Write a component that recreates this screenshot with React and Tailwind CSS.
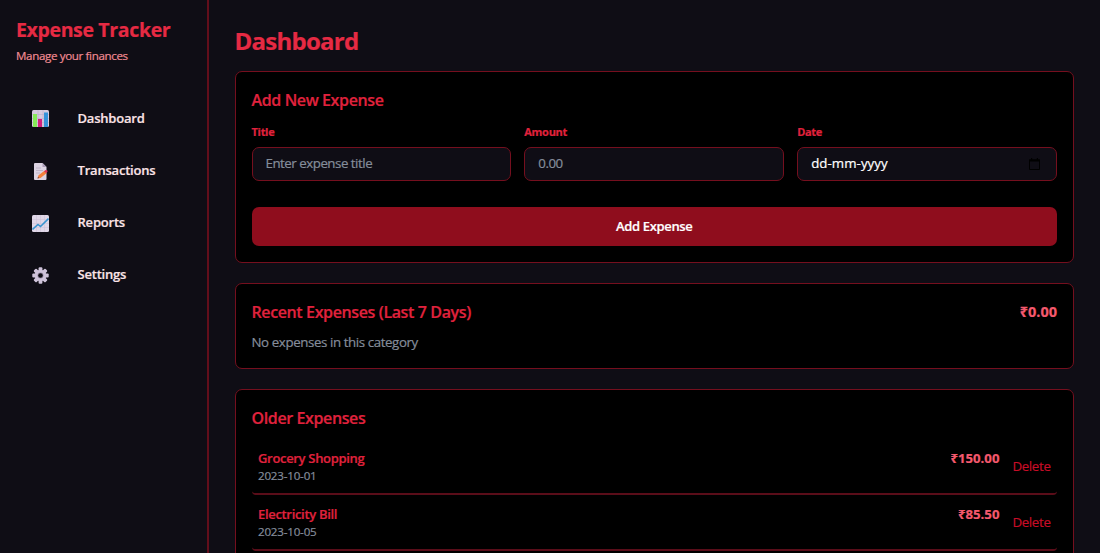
import React, { useState } from 'react';

const ChartIcon = () => (
  <svg viewBox="0 0 17 17" className="w-[17px] h-[17px] -mt-px">
    <rect width="17" height="17" rx="1.5" fill="#d6cbdf" />
    <path d="M0 4.5h17M0 8.5h17M0 12.5h17M6 0v17M11 0v17" stroke="#bcaec9" strokeWidth=".6" />
    <rect x="1" y="4" width="4" height="13" fill="#86ea58" />
    <rect x="6" y="9" width="4" height="8" fill="#d2207c" />
    <rect x="12" y="2.5" width="4" height="14.5" fill="#3593da" />
  </svg>
);

const MemoIcon = () => (
  <svg viewBox="0 0 17 17" className="w-[17px] h-[17px]">
    <path d="M3 0h7.5l4 4v12q0 1-1 1H3q-1 0-1-1V1q0-1 1-1z" fill="#dcd3e2" />
    <path d="M10.5 0v4h4z" fill="#a99bb5" />
    <path d="M4 5h5M4 7.5h7M4 10h4" stroke="#b8acc2" strokeWidth=".8" />
    <path d="M5.5 15.5l1-3.2 6-4.5 2 2.4-6 4.7z" fill="#f5813b" />
    <path d="M12 8.2l1.7-1.2q1.4-.3 2 1.3l-1.4 2z" fill="#dc3455" />
    <path d="M5.5 15.5l.6-1.8 1 1.3z" fill="#604450" />
  </svg>
);

const TrendIcon = () => (
  <svg viewBox="0 0 17 17" className="w-[17px] h-[17px]">
    <rect width="17" height="17" rx="1.5" fill="#e0d7e8" />
    <path d="M0 4.5h17M0 8.5h17M0 12.5h17M4.5 0v17M8.5 0v17M12.5 0v17" stroke="#cfc3d9" strokeWidth=".6" />
    <path d="M.5 14.5L6 9.5l2.5 2L16.5 3.5" fill="none" stroke="#3a94cf" strokeWidth="1.6" />
  </svg>
);

const GearIcon = () => (
  <svg viewBox="0 0 17 17" className="w-[17px] h-[17px]">
    <g fill="#cfc3da">
      <rect x="6.6" y=".3" width="3.8" height="16.4" rx="1" />
      <rect x="6.6" y=".3" width="3.8" height="16.4" rx="1" transform="rotate(45 8.5 8.5)" />
      <rect x="6.6" y=".3" width="3.8" height="16.4" rx="1" transform="rotate(90 8.5 8.5)" />
      <rect x="6.6" y=".3" width="3.8" height="16.4" rx="1" transform="rotate(135 8.5 8.5)" />
      <circle cx="8.5" cy="8.5" r="5.8" />
    </g>
    <circle cx="8.5" cy="8.5" r="3" fill="#9d90aa" />
    <circle cx="8.5" cy="8.5" r="2.3" fill="#0f0d15" />
  </svg>
);

const CalendarIcon = () => (
  <svg viewBox="0 0 11 12" className="w-[11px] h-3 -mt-px">
    <path d="M.5 2h10v9.5H.5z" fill="none" stroke="#000" />
    <path d="M0 1.5h11v2H0zM2 0h1.2v2H2zM7.8 0H9v2H7.8z" fill="#000" />
  </svg>
);

const navItems = [
  { label: 'Dashboard', icon: <ChartIcon /> },
  { label: 'Transactions', icon: <MemoIcon /> },
  { label: 'Reports', icon: <TrendIcon /> },
  { label: 'Settings', icon: <GearIcon /> },
];

const initialExpenses = [
  { id: 1, title: 'Grocery Shopping', amount: 150, date: '2023-10-01' },
  { id: 2, title: 'Electricity Bill', amount: 85.5, date: '2023-10-05' },
];

const Card = ({ className, children }) => (
  <section className={`bg-black border border-[#750f1e] rounded-[7px] px-4 ${className}`}>{children}</section>
);

const CardTitle = ({ children }) => (
  <h3 className="text-[16px] leading-6 font-semibold tracking-[-0.38px] text-[#e0223d]">{children}</h3>
);

const Field = ({ label, children }) => (
  <label className="block">
    <span className="block text-[11px] leading-4 font-bold tracking-[-0.3px] text-[#e0223d]">{label}</span>
    <span className="flex items-center justify-between mt-[7px] h-[34px] pl-[13px] pr-4 bg-[#0f0d15] border border-[#750f1e] rounded-[7px] text-[13.3px] text-white">
      {children}
    </span>
  </label>
);

const inputClass =
  'w-full min-w-0 bg-transparent outline-none tracking-[-0.48px] placeholder:text-[#858d9b]';

const App = () => {
  const [expenses, setExpenses] = useState(initialExpenses);

  return (
    <div className="flex h-screen overflow-hidden bg-[#0f0d15] font-['Open_Sans','Noto_Sans',sans-serif] whitespace-nowrap [-webkit-text-stroke:0.2px]">
      {/* Sidebar */}
      <aside className="w-[209px] shrink-0 border-r-2 border-[#620e1b]">
        <div className="pl-4 pt-4">
          <h1 className="text-[19.5px] leading-7 font-bold tracking-[-0.35px] text-[#e62a43]">Expense Tracker</h1>
          <p className="mt-1 text-[11.6px] leading-4 tracking-[-0.36px] text-[#f08a92]">Manage your finances</p>
        </div>
        <nav className="mt-[35px] pl-8 flex flex-col gap-3">
          {navItems.map((item) => (
            <a key={item.label} href="#" className="flex items-center h-10 gap-[28.5px]">
              {item.icon}
              <span className="text-[13px] font-semibold tracking-[-0.2px] text-[#fbe3e6]">{item.label}</span>
            </a>
          ))}
        </nav>
      </aside>

      {/* Main content */}
      <main className="flex-1 min-w-0 pl-[25.5px] pr-[26px] pt-[26px]">
        <h2 className="text-[24px] leading-[30px] font-bold tracking-[-0.75px] text-[#e62a43]">Dashboard</h2>

        <Card className="mt-[15px] h-[192px] pt-4">
          <CardTitle>Add New Expense</CardTitle>
          <form onSubmit={(e) => e.preventDefault()}>
            <div className="grid grid-cols-3 gap-[13px] mt-3">
              <Field label="Title">
                <input className={inputClass} placeholder="Enter expense title" />
              </Field>
              <Field label="Amount">
                <input className={inputClass} placeholder="0.00" />
              </Field>
              <Field label="Date">
                <span className="tracking-[0.05px]">dd-mm-yyyy</span>
                <CalendarIcon />
              </Field>
            </div>
            <button className="mt-[26px] w-full h-[39px] rounded-[7px] bg-[#8f0d1d] text-[13px] font-semibold tracking-[-0.36px] text-white">
              Add Expense
            </button>
          </form>
        </Card>

        <Card className="mt-5 h-[86px] pt-4">
          <div className="flex items-center justify-between">
            <CardTitle>Recent Expenses (Last 7 Days)</CardTitle>
            <span className="text-[14.5px] leading-6 font-bold text-[#f4596d]">₹0.00</span>
          </div>
          <p className="mt-2 text-[13.3px] leading-5 tracking-[-0.4px] text-[#858d9b]">No expenses in this category</p>
        </Card>

        <Card className="mt-5 h-[260px] pt-4">
          <CardTitle>Older Expenses</CardTitle>
          <ul className="mt-[9px]">
            {expenses.map((expense) => (
              <li key={expense.id} className="flex items-start justify-between h-14 pt-[9px] px-[6.5px] border-b-2 border-[#5a0d19] rounded-[4px]">
                <div>
                  <p className="text-[13px] leading-5 font-semibold tracking-[-0.32px] text-[#e0223d]">{expense.title}</p>
                  <p className="text-[11.6px] leading-4 tracking-[-0.2px] text-[#858d9b]">{expense.date}</p>
                </div>
                <div className="flex gap-[13px]">
                  <span className="text-[13.2px] leading-5 font-bold text-[#f4596d]">₹{expense.amount.toFixed(2)}</span>
                  <button
                    className="mt-2 text-[13.3px] leading-5 tracking-[-0.35px] text-[#c80d27]"
                    onClick={() => setExpenses(expenses.filter((e) => e.id !== expense.id))}
                  >
                    Delete
                  </button>
                </div>
              </li>
            ))}
          </ul>
        </Card>
      </main>
    </div>
  );
};

export default App;
